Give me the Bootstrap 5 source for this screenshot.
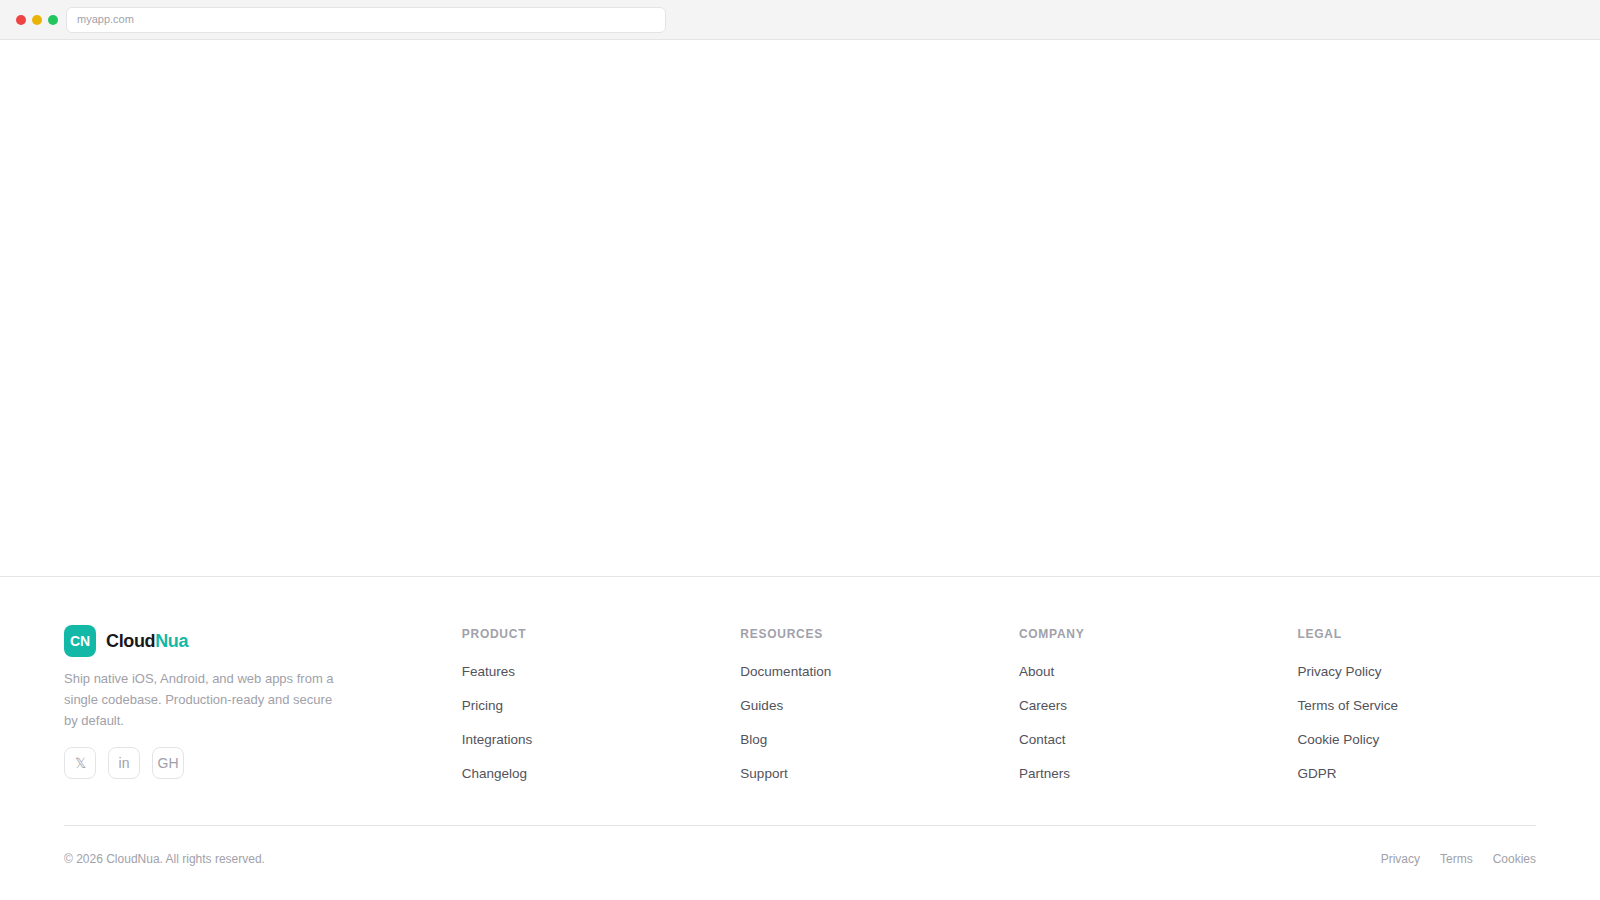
<!DOCTYPE html>
<html lang="en">
<head>
<meta charset="utf-8">
<meta name="viewport" content="width=device-width, initial-scale=1">
<title>CloudNua</title>
<link href="https://cdn.jsdelivr.net/npm/bootstrap@5.3.0/dist/css/bootstrap.min.css" rel="stylesheet">
<style>
  body { font-family: "Liberation Sans", Arial, sans-serif; color: #18181b; background: #fff; }
  a { text-decoration: none; }
  .chrome-bar { height: 40px; background: #f4f4f5; border-bottom: 1px solid #e4e4e7; gap: 6px; }
  .dot { width: 10px; height: 10px; }
  .url-field { width: 600px; height: 26px; margin-left: 2px; padding: 0 10px; border: 1px solid #e4e4e7; border-radius: 6px; font-size: 11px; color: #a1a1aa; }
  .site-footer { border-top: 1px solid #e4e4e7; padding: 48px 64px 32px; }
  .footer-grid { display: grid; grid-template-columns: 1.5fr repeat(4, 1fr); gap: 40px; }
  .brand-row { gap: 10px; margin-bottom: 12px; }
  .brand-mark { width: 32px; height: 32px; border-radius: 8px; background: #14b8a6; font-size: 14px; }
  .brand-name { font-size: 18px; letter-spacing: -.36px; }
  .teal { color: #14b8a6; }
  .tagline { font-size: 13px; line-height: 1.6; max-width: 280px; color: #a1a1aa; margin-bottom: 16px; }
  .social { gap: 12px; }
  .social a { width: 32px; height: 32px; border: 1px solid #e4e4e7; border-radius: 8px; font-size: 14px; color: #a1a1aa; }
  .site-footer h4 { font-size: 12px; line-height: 1.5; letter-spacing: .72px; color: #a1a1aa; margin-bottom: 16px; }
  .link-col { gap: 10px; }
  .link-col a { font-size: 13.5px; color: #52525b; }
  .bottom-row { margin-top: 40px; padding-top: 24px; border-top: 1px solid #e4e4e7; font-size: 12px; color: #a1a1aa; }
  .bottom-row nav { gap: 20px; }
  .bottom-row a { color: inherit; }
</style>
</head>
<body class="d-flex flex-column min-vh-100">
<header class="chrome-bar d-flex align-items-center px-3">
  <span class="dot rounded-circle" style="background:#ef4444"></span>
  <span class="dot rounded-circle" style="background:#eab308"></span>
  <span class="dot rounded-circle" style="background:#22c55e"></span>
  <div class="url-field bg-white d-flex align-items-center">myapp.com</div>
</header>
<main class="flex-grow-1"></main>
<footer class="site-footer">
  <div class="footer-grid">
    <div>
      <div class="brand-row d-flex align-items-center">
        <div class="brand-mark d-flex align-items-center justify-content-center text-white fw-bold">CN</div>
        <div class="brand-name fw-bold">Cloud<span class="teal">Nua</span></div>
      </div>
      <p class="tagline">Ship native iOS, Android, and web apps from a single codebase. Production-ready and secure by default.</p>
      <div class="social d-flex">
        <a href="#" class="d-flex align-items-center justify-content-center">𝕏</a>
        <a href="#" class="d-flex align-items-center justify-content-center">in</a>
        <a href="#" class="d-flex align-items-center justify-content-center">GH</a>
      </div>
    </div>
    <div>
      <h4 class="fw-bold text-uppercase">Product</h4>
      <ul class="link-col list-unstyled d-flex flex-column mb-0">
        <li><a href="#">Features</a></li>
        <li><a href="#">Pricing</a></li>
        <li><a href="#">Integrations</a></li>
        <li><a href="#">Changelog</a></li>
      </ul>
    </div>
    <div>
      <h4 class="fw-bold text-uppercase">Resources</h4>
      <ul class="link-col list-unstyled d-flex flex-column mb-0">
        <li><a href="#">Documentation</a></li>
        <li><a href="#">Guides</a></li>
        <li><a href="#">Blog</a></li>
        <li><a href="#">Support</a></li>
      </ul>
    </div>
    <div>
      <h4 class="fw-bold text-uppercase">Company</h4>
      <ul class="link-col list-unstyled d-flex flex-column mb-0">
        <li><a href="#">About</a></li>
        <li><a href="#">Careers</a></li>
        <li><a href="#">Contact</a></li>
        <li><a href="#">Partners</a></li>
      </ul>
    </div>
    <div>
      <h4 class="fw-bold text-uppercase">Legal</h4>
      <ul class="link-col list-unstyled d-flex flex-column mb-0">
        <li><a href="#">Privacy Policy</a></li>
        <li><a href="#">Terms of Service</a></li>
        <li><a href="#">Cookie Policy</a></li>
        <li><a href="#">GDPR</a></li>
      </ul>
    </div>
  </div>
  <div class="bottom-row d-flex align-items-center justify-content-between">
    <span>© 2026 CloudNua. All rights reserved.</span>
    <nav class="d-flex">
      <a href="#">Privacy</a>
      <a href="#">Terms</a>
      <a href="#">Cookies</a>
    </nav>
  </div>
</footer>
<script src="https://cdn.jsdelivr.net/npm/bootstrap@5.3.0/dist/js/bootstrap.bundle.min.js"></script>
</body>
</html>
